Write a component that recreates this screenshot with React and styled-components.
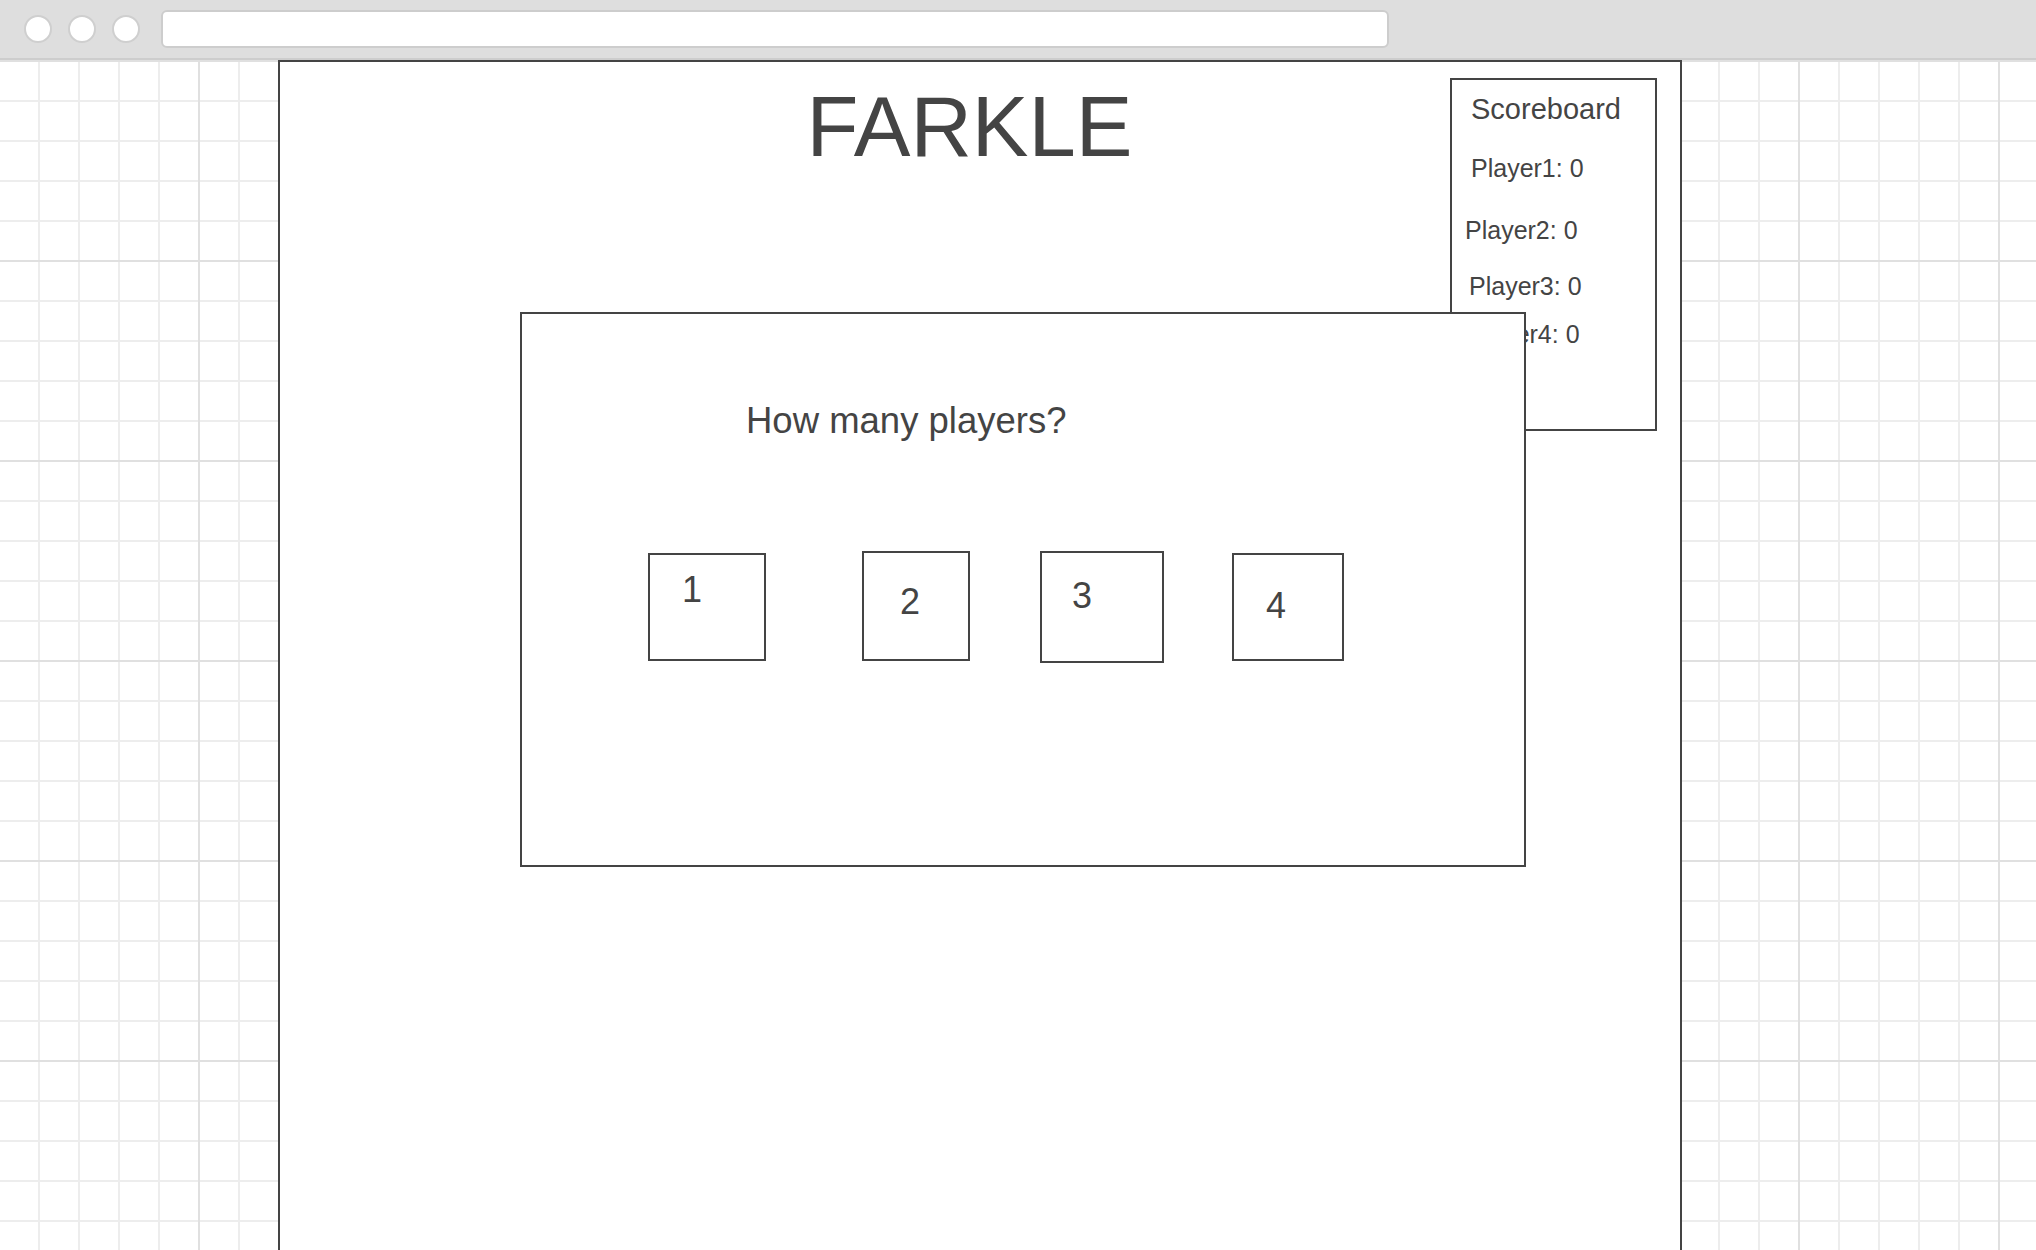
import React from "react";
import styled, { createGlobalStyle } from "styled-components";

const Global = createGlobalStyle`
  html, body {
    margin: 0;
    padding: 0;
    height: 100%;
    overflow: hidden;
    background: #ffffff;
  }
  body {
    font-family: "Liberation Sans", Arial, sans-serif;
    color: #444444;
  }
  * { box-sizing: border-box; }
`;

const Page = styled.div`
  width: 2036px;
  height: 1250px;
  display: flex;
  flex-direction: column;
  overflow: hidden;
`;

const Chrome = styled.header`
  height: 60px;
  flex: none;
  background: #dedede;
  border-bottom: 2px solid #cdcdcd;
  display: flex;
  align-items: center;
  padding-left: 24px;
  gap: 16px;
`;

const Dot = styled.span`
  width: 28px;
  height: 28px;
  border-radius: 50%;
  background: #ffffff;
  border: 2px solid #cfcfcf;
  flex: none;
`;

const UrlBar = styled.div`
  margin-left: 5px;
  width: 1228px;
  height: 38px;
  background: #ffffff;
  border: 2px solid #cdcdcd;
  border-radius: 6px;
`;

const Canvas = styled.main`
  flex: 1;
  overflow: hidden;
  background-color: #ffffff;
  background-image:
    linear-gradient(to right, #e0e0e0 2px, transparent 2px),
    linear-gradient(to bottom, #e0e0e0 2px, transparent 2px),
    linear-gradient(to right, #ededed 2px, transparent 2px),
    linear-gradient(to bottom, #ededed 2px, transparent 2px);
  background-size: 200px 200px, 200px 200px, 40px 40px, 40px 40px;
  background-position: 198px 0, 0 0, 38px 0, 0 0;
`;

const Board = styled.section`
  position: relative;
  margin-left: 278px;
  width: 1404px;
  height: 1240px;
  background: #ffffff;
  border: 2px solid #444444;
`;

const Header = styled.div`
  display: grid;
  grid-template-areas: "stack";
  align-items: start;
`;

const Title = styled.h1`
  grid-area: stack;
  justify-self: stretch;
  margin: 22px 0 0 0;
  padding-right: 21px;
  text-align: center;
  font-size: 85px;
  line-height: 85px;
  font-weight: 400;
  color: #444444;
`;

const Scoreboard = styled.aside`
  grid-area: stack;
  justify-self: end;
  margin: 16px 23px 0 0;
  width: 207px;
  height: 353px;
  border: 2px solid #444444;
  background: #ffffff;
  display: flex;
  flex-direction: column;
  align-items: flex-start;
`;

const BoardHeading = styled.div`
  margin: 15px 0 0 19px;
  font-size: 29px;
  line-height: 29px;
  color: #444444;
`;

const ScoreRow = styled.div`
  margin-top: ${(p) => p.$top}px;
  margin-left: ${(p) => p.$indent}px;
  font-size: 25px;
  line-height: 25px;
  color: #444444;
  white-space: nowrap;
`;

const Modal = styled.div`
  position: absolute;
  left: 240px;
  top: 250px;
  width: 1006px;
  height: 555px;
  background: #ffffff;
  border: 2px solid #444444;
  display: flex;
  flex-direction: column;
  align-items: flex-start;
  padding-top: 88px;
`;

const Question = styled.div`
  margin-left: 224px;
  font-size: 36.5px;
  line-height: 37px;
  color: #444444;
`;

const ChoiceRow = styled.div`
  margin-top: 112px;
  margin-left: 126px;
  display: flex;
  align-items: flex-start;
`;

const Choice = styled.button`
  flex: none;
  margin-left: ${(p) => p.$gap}px;
  margin-top: ${(p) => p.$drop}px;
  width: ${(p) => p.$w}px;
  height: ${(p) => p.$h}px;
  padding: ${(p) => p.$pt}px 0 0 ${(p) => p.$pl}px;
  background: #ffffff;
  border: 2px solid #444444;
  border-radius: 0;
  display: flex;
  align-items: flex-start;
  justify-content: flex-start;
  font-family: "Liberation Sans", Arial, sans-serif;
  font-size: 36px;
  line-height: 36px;
  color: #444444;
  cursor: pointer;
`;

const scores = [
  { name: "Player1", score: 0, top: 32, indent: 19 },
  { name: "Player2", score: 0, top: 37, indent: 13 },
  { name: "Player3", score: 0, top: 31, indent: 17 },
  { name: "Player4", score: 0, top: 23, indent: 15 },
];

const choices = [
  { n: 1, gap: 0, drop: 2, w: 118, h: 108, pl: 32, pt: 17 },
  { n: 2, gap: 96, drop: 0, w: 108, h: 110, pl: 36, pt: 31 },
  { n: 3, gap: 70, drop: 0, w: 124, h: 112, pl: 30, pt: 25 },
  { n: 4, gap: 68, drop: 2, w: 112, h: 108, pl: 32, pt: 33 },
];

export default function App() {
  return (
    <>
      <Global />
      <Page>
        <Chrome>
          <Dot />
          <Dot />
          <Dot />
          <UrlBar />
        </Chrome>
        <Canvas>
          <Board>
            <Header>
              <Title>FARKLE</Title>
              <Scoreboard>
                <BoardHeading>Scoreboard</BoardHeading>
                {scores.map((s) => (
                  <ScoreRow key={s.name} $top={s.top} $indent={s.indent}>
                    {s.name}: {s.score}
                  </ScoreRow>
                ))}
              </Scoreboard>
            </Header>
            <Modal>
              <Question>How many players?</Question>
              <ChoiceRow>
                {choices.map((c) => (
                  <Choice
                    key={c.n}
                    $gap={c.gap}
                    $drop={c.drop}
                    $w={c.w}
                    $h={c.h}
                    $pl={c.pl}
                    $pt={c.pt}
                  >
                    {c.n}
                  </Choice>
                ))}
              </ChoiceRow>
            </Modal>
          </Board>
        </Canvas>
      </Page>
    </>
  );
}
